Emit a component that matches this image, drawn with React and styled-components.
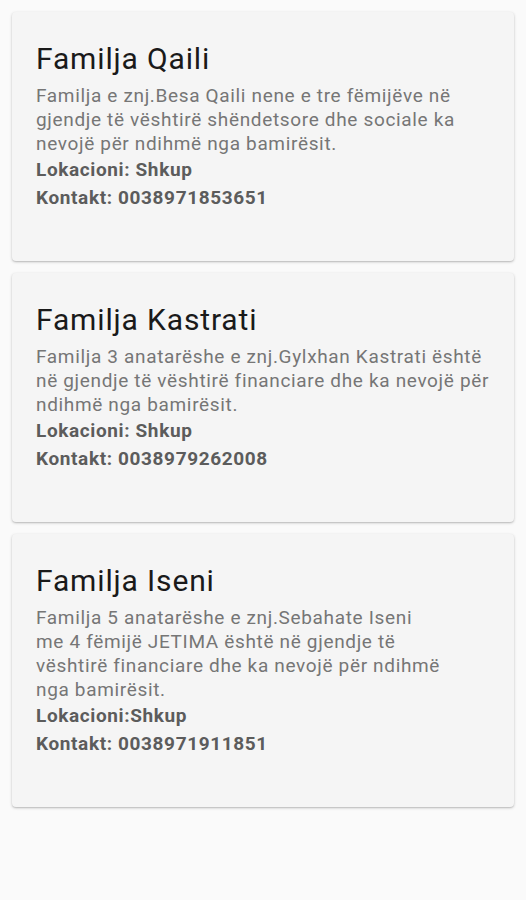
import styled, { createGlobalStyle } from 'styled-components';

const GlobalStyle = createGlobalStyle`
  html, body {
    margin: 0;
    padding: 0;
    background: #fafafa;
  }
  body {
    font-family: Roboto, "Noto Sans", sans-serif;
  }
`;

const Page = styled.div`
  min-height: 900px;
  display: flex;
  flex-direction: column;
  gap: 12px;
  padding: 12px 12px;
  box-sizing: border-box;
  background: #fafafa;
`;

const Card = styled.div`
  background: #f5f5f5;
  border-radius: 4px;
  box-shadow: 0 1px 3px rgba(0, 0, 0, 0.22), 0 1px 1px rgba(0, 0, 0, 0.08);
  padding: 29px 24px 49px;
`;

const Title = styled.h2`
  margin: 0 0 7px;
  font-size: 30px;
  line-height: 36px;
  font-weight: 400;
  letter-spacing: 0.85px;
  color: #1a1a1a;
`;

const Description = styled.p`
  margin: 0;
  font-size: 19px;
  line-height: 24px;
  letter-spacing: 0.66px;
  color: #767676;

  span {
    display: block;
    white-space: nowrap;
  }
`;

const Info = styled.div`
  font-size: 19px;
  line-height: 28px;
  font-weight: 700;
  letter-spacing: 0.62px;
  color: #5c5c5c;
`;

const families = [
  {
    name: 'Familja Qaili',
    lines: [
      'Familja e znj.Besa Qaili nene e tre fëmijëve në',
      'gjendje të vështirë shëndetsore dhe sociale ka',
      'nevojë për ndihmë nga bamirësit.',
    ],
    location: 'Lokacioni: Shkup',
    contact: 'Kontakt: 0038971853651',
  },
  {
    name: 'Familja Kastrati',
    lines: [
      'Familja 3 anatarëshe e znj.Gylxhan Kastrati është',
      'në gjendje të vështirë financiare dhe ka nevojë për',
      'ndihmë nga bamirësit.',
    ],
    location: 'Lokacioni: Shkup',
    contact: 'Kontakt: 0038979262008',
  },
  {
    name: 'Familja Iseni',
    lines: [
      'Familja 5 anatarëshe e znj.Sebahate Iseni',
      'me 4 fëmijë JETIMA është në gjendje të',
      'vështirë financiare dhe ka nevojë për ndihmë',
      'nga bamirësit.',
    ],
    location: 'Lokacioni:Shkup',
    contact: 'Kontakt: 0038971911851',
  },
];

export default function App() {
  return (
    <>
      <GlobalStyle />
      <Page>
        {families.map((f) => (
          <Card key={f.name}>
            <Title>{f.name}</Title>
            <Description>
              {f.lines.map((l) => (
                <span key={l}>{l}</span>
              ))}
            </Description>
            <Info>{f.location}</Info>
            <Info>{f.contact}</Info>
          </Card>
        ))}
      </Page>
    </>
  );
}
